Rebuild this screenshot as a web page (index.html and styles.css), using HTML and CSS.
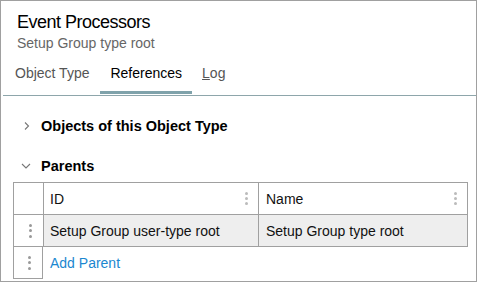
FILE: index.html
```html
<!DOCTYPE html>
<html lang="en">
<head>
  <meta charset="UTF-8">
  <title>Event Processors</title>
  <link rel="stylesheet" href="styles.css">
</head>
<body>
  <div class="panel">
    <div class="header">
      <h1>Event Processors</h1>
      <div class="subtitle">Setup Group type root</div>
    </div>

    <div class="tabs">
      <div class="tab first">Object Type</div>
      <div class="tab active">References</div>
      <div class="tab"><u>L</u>og</div>
    </div>

    <div class="section top">
      <div class="section-head">
        <svg class="chev" width="10" height="10" viewBox="0 0 10 10"><path d="M3 1.5 L6.5 5 L3 8.5" fill="none" stroke="#777" stroke-width="1.1"/></svg>
        <span>Objects of this Object Type</span>
      </div>
    </div>

    <div class="section">
      <div class="section-head parents">
        <svg class="chev" width="10" height="10" viewBox="0 0 10 10"><path d="M1 3 L5 7 L9 3" fill="none" stroke="#777" stroke-width="1.1"/></svg>
        <span>Parents</span>
      </div>

      <div class="grid">
        <div class="row head">
          <div class="cell menu"></div>
          <div class="cell col-id">ID <span class="kebab"><i></i><i></i><i></i></span></div>
          <div class="cell col-name">Name <span class="kebab"><i></i><i></i><i></i></span></div>
        </div>
        <div class="row data">
          <div class="cell menu"><span class="kebab dark"><i></i><i></i><i></i></span></div>
          <div class="cell col-id">Setup Group user-type root</div>
          <div class="cell col-name">Setup Group type root</div>
        </div>
        <div class="row add">
          <div class="cell menu"><span class="kebab dark"><i></i><i></i><i></i></span></div>
          <div class="cell link">Add Parent</div>
        </div>
      </div>
    </div>
  </div>
</body>
</html>
```

FILE: styles.css
```css
* {
  box-sizing: border-box;
}
body {
  margin: 0;
  font-family: "Liberation Sans", Arial, sans-serif;
  background: #fff;
}
.panel {
  width: 477px;
  height: 282px;
  border: 1px solid #a0a0a0;
  background: #fff;
}
.header {
  padding: 8px 16px 0;
}
.header h1 {
  margin: 0;
  font-weight: normal;
  font-size: 18px;
  letter-spacing: -0.5px;
  line-height: 26px;
  color: #000;
}
.subtitle {
  font-size: 14px;
  line-height: 17px;
  color: #666;
}
.tabs {
  display: flex;
  margin: 9px 0 0 2px;
  border-bottom: 1px solid #8ea6ab;
}
.tab {
  font-size: 14px;
  line-height: 20px;
  padding: 2px 10px 8px;
  color: #555;
  border-bottom: 3px solid transparent;
  margin-bottom: 1px;
}
.tab.first {
  padding-left: 12px;
  padding-right: 11px;
}
.tab.active {
  color: #000;
  border-bottom-color: #7fa2aa;
}
.tab u {
  text-decoration-thickness: 1px;
}
.section {
  padding: 0 0 0 12px;
}
.section.top {
  margin-top: 10px;
}
.section-head {
  display: flex;
  align-items: center;
  height: 40px;
  padding-left: 9px;
  font-size: 14.5px;
  font-weight: bold;
  color: #000;
}
.section-head.parents {
  height: 36px;
  padding-top: 4px;
  padding-left: 8px;
}
.chev {
  margin-right: 9px;
}
.section-head.parents .chev {
  margin-right: 10px;
}
.grid {
  width: 455px;
  font-size: 14px;
}
.row {
  display: flex;
  height: 32px;
}
.cell {
  display: flex;
  align-items: center;
  border-left: 1px solid #a0a0a0;
  border-top: 1px solid #a0a0a0;
  padding-left: 6px;
  color: #111;
}
.row .cell:last-child {
  border-right: 1px solid #a0a0a0;
}
.row.data .cell {
  background: #eeeeee;
  border-bottom: 1px solid #a0a0a0;
}
.row.data {
  height: 33px;
}
.row.add .cell {
  border-top: none;
}
.cell.menu {
  width: 30px;
  padding-left: 3px;
  justify-content: center;
  background: #fff !important;
}
.row.add .cell.menu {
  border-bottom: 1px solid #a0a0a0;
  border-right: 1px solid #a0a0a0;
}
.row.add .cell.link {
  border: none;
  color: #1b87d0;
  padding-left: 7px;
}
.col-id {
  width: 215px;
  justify-content: space-between;
  padding-right: 10px;
}
.col-name {
  width: 210px;
  padding-left: 7px;
  justify-content: space-between;
  padding-right: 10px;
}
.kebab {
  display: flex;
  flex-direction: column;
  gap: 2px;
}
.kebab i {
  display: block;
  width: 3px;
  height: 3px;
  border-radius: 50%;
  background: #bbb;
}
.kebab.dark {
  gap: 2.5px;
}
.kebab.dark i {
  background: #999;
}
```
